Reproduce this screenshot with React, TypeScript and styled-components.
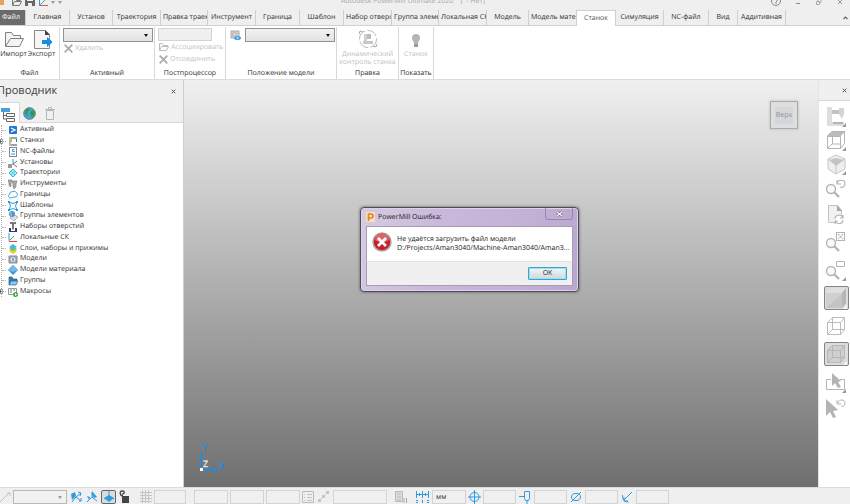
import React from "react";
import styled, { createGlobalStyle, css } from "styled-components";

const Global = createGlobalStyle`
  * { box-sizing: border-box; }
  body { margin: 0; overflow: hidden; background: #efefef; }
  body, button, input, select {
    font-family: "Open Sans", "Noto Sans", sans-serif;
    font-size: 7px;
    color: #303030;
    text-rendering: geometricPrecision;
  }
  button, input, select { margin: 0; padding: 0; border-radius: 0; }
  ul { margin: 0; padding: 0; list-style: none; }
  svg { display: block; flex: none; }
`;

const Shell = styled.div`
  display: grid;
  grid-template-rows: auto auto auto minmax(0, 1fr) auto;
  height: 100vh;
  overflow: hidden;
`;

const PlainButton = styled.button`
  display: flex;
  align-items: center;
  justify-content: center;
  border: 0;
  background: transparent;
`;

/* ---------- title bar ---------- */

const TitleBar = styled.header`
  display: grid;
  grid-template-columns: 1fr auto 1fr;
  align-items: center;
  height: 18px;
  margin-top: -8px;
  padding-top: 2px;
`;

const QuickAccess = styled.div`
  display: flex;
  align-items: center;
  gap: 3px;
`;

const Title = styled.div`
  color: #a8a8a8;
  line-height: 10px;
  white-space: pre;
  margin-right: 24px;
`;

const WindowButtons = styled.div`
  display: flex;
  justify-content: flex-end;
  align-items: center;
  gap: 11px;
  padding-right: 5px;
`;

/* ---------- ribbon ---------- */

const Tabs = styled.nav`
  display: flex;
  height: 16px;
  border-bottom: 1px solid #d2d2d2;
`;

const Tab = styled.button<{ $w: number; $kind?: "file" | "active" }>`
  flex: 0 1 ${(p) => p.$w}px;
  height: 15px;
  padding: 0 2px;
  border: 0;
  border-right: 1px solid #cfcfcf;
  background: transparent;
  overflow: hidden;
  white-space: nowrap;
  line-height: 15px;
  text-align: center;
  ${(p) =>
    p.$kind === "file" &&
    css`
      background: #6b6b6b;
      color: #fff;
      padding-right: 6px;
    `}
  ${(p) =>
    p.$kind === "active" &&
    css`
      height: 16px;
      background: #fff;
      border-top: 1px solid #cfcfcf;
      color: #555;
    `}
`;

const Collapse = styled(PlainButton)`
  margin-left: auto;
  width: 10px;
`;

const Ribbon = styled.section`
  display: flex;
  height: 54px;
  padding-top: 1px;
  background: #fff;
  border-bottom: 1px solid #dcdcdc;
`;

const Group = styled.div<{ $w: number }>`
  display: flex;
  flex-direction: column;
  justify-content: space-between;
  flex: 0 0 ${(p) => p.$w}px;
  min-width: 0;
  border-right: 1px solid #d8d8d8;
  white-space: nowrap;
`;

const GroupBody = styled.div<{ $row?: boolean }>`
  display: flex;
  flex-direction: ${(p) => (p.$row ? "row" : "column")};
  align-items: flex-start;
  padding: 1px 0 0 3px;
  gap: ${(p) => (p.$row ? 4 : 0)}px;
`;

const GroupTitle = styled.div`
  text-align: center;
  line-height: 11px;
`;

const BigButton = styled.button<{ $w: number; $off?: boolean }>`
  display: flex;
  flex-direction: column;
  align-items: center;
  width: ${(p) => p.$w}px;
  border: 0;
  background: transparent;
  line-height: 8px;
  white-space: pre;
  gap: 2px;
  color: ${(p) => (p.$off ? "#c2c2c2" : "#303030")};
`;

const BigRow = styled.div<{ $start?: boolean }>`
  display: flex;
  justify-content: ${(p) => (p.$start ? "flex-start" : "center")};
  padding-top: 2px;
`;

const SmallButton = styled.button`
  display: flex;
  align-items: center;
  gap: 2px;
  height: 12px;
  border: 0;
  background: transparent;
  color: #c2c2c2;
  padding-left: 1px;
`;

const SelectBox = styled.div`
  display: grid;
  grid-template-columns: 1fr 8px;
  align-items: center;
  width: 90px;
  height: 14px;
  border: 1px solid #929292;
  background: linear-gradient(#f2f2f2, #e2e2e2);
`;

const Select = styled.select`
  appearance: none;
  grid-area: 1 / 1 / 2 / 3;
  width: 100%;
  height: 100%;
  border: 0;
  background: transparent;
`;

const Arrow = styled.span`
  grid-area: 1 / 2;
  pointer-events: none;
  width: 0;
  border: 2px solid transparent;
  border-top: 3px solid #111;
  border-bottom: 0;
`;

const QuickArrow = styled(Arrow)`
  border-top-color: #999;
`;

const Field = styled.input<{ $w: number }>`
  flex: 0 0 ${(p) => p.$w}px;
  width: ${(p) => p.$w}px;
  height: 14px;
  border: 1px solid #d3d3d3;
  background: #f0f0f0;
  padding: 0 3px;
`;

const PostField = styled(Field)`
  flex: 0 0 13px;
  height: 13px;
`;

/* ---------- main area ---------- */

const Main = styled.main`
  display: grid;
  grid-template-columns: 184px minmax(0, 1fr) 32px;
  min-height: 0;
`;

const Explorer = styled.aside`
  display: flex;
  flex-direction: column;
  background: #fff;
  border-right: 1px solid #cfcfcf;
  overflow: hidden;
`;

const ExplorerHead = styled.div`
  display: flex;
  align-items: center;
  justify-content: space-between;
  height: 22px;
  background: #f0f0f0;
  padding-right: 7px;
`;

const ExplorerTitle = styled.h1`
  margin: 0 0 0 -3px;
  font-size: 11px;
  font-weight: 400;
  line-height: 20px;
  color: #404040;
`;

const ExplorerTabs = styled.div`
  display: flex;
  height: 21px;
  background: #f0f0f0;
  border-bottom: 1px solid #d8d8d8;
`;

const ExplorerTab = styled(PlainButton)<{ $w: number; $active?: boolean }>`
  width: ${(p) => p.$w}px;
  height: ${(p) => (p.$active ? 21 : 20)}px;
  padding-top: 3px;
  ${(p) =>
    p.$active &&
    css`
      justify-content: flex-start;
      background: #fff;
      border-top: 1px solid #d8d8d8;
      border-right: 1px solid #d8d8d8;
    `}
`;

const Tree = styled.ul`
  display: grid;
  grid-template-rows: repeat(16, 1fr);
  height: 172px;
  margin: 2px 0 0 1px;
  border-left: 1px dotted #b0b0b0;
`;

const TreeRow = styled.li`
  display: flex;
  align-items: center;
  gap: 2px;
  white-space: nowrap;
  line-height: 10px;
`;

const Branch = styled.span`
  width: 4px;
  border-top: 1px dotted #b0b0b0;
`;

const Expander = styled(PlainButton)`
  width: 5px;
  height: 5px;
  margin: 0 -3px 0 -4px;
  border: 1px solid #a0a0a0;
  background: #fff;
`;

const Viewport = styled.section`
  position: relative;
  background: linear-gradient(#f0f0f0, #6f6f6f);
`;

const ViewCube = styled.button`
  position: absolute;
  top: 21px;
  right: 20px;
  width: 28px;
  height: 28px;
  border: 1px solid #a9a9a9;
  background: #dedede;
  color: #8d9299;
  box-shadow: 0 0 3px #bdbdbd;
  padding: 0;
`;

const CubeFace = styled.span`
  display: block;
  margin: 4px;
  line-height: 17px;
  background: #d3d6da;
`;

const Axes = styled.svg`
  position: absolute;
  left: 14px;
  bottom: 14px;
`;

const Dialog = styled.div`
  position: absolute;
  left: 176px;
  top: 127px;
  width: 219px;
  padding: 0 5px 5px;
  border: 1px solid #51495c;
  border-radius: 4px;
  background: linear-gradient(100deg, #d6cbe1 0%, #c9b8dc 35%, #c2b0d6 75%, #b9a8ce);
  box-shadow: 0 0 3px #555, inset 0 0 0 1px #ded3ea;
`;

const DialogHead = styled.div`
  display: flex;
  align-items: center;
  gap: 3px;
  height: 18px;
  color: #222;
`;

const DialogClose = styled(PlainButton)`
  align-self: flex-start;
  margin-left: auto;
  width: 28px;
  height: 12px;
  border: 1px solid #9788ac;
  border-top: 0;
  border-radius: 0 0 3px 3px;
`;

const DialogBody = styled.div`
  display: flex;
  gap: 5px;
  height: 35px;
  padding: 5px 5px 0;
  background: #fff;
  border: 1px solid #a79bb6;
  border-bottom: 0;
`;

const Message = styled.p`
  margin: 3px 0 0;
  line-height: 9px;
  white-space: nowrap;
  color: #222;
`;

const DialogFoot = styled.div`
  display: flex;
  align-items: center;
  justify-content: flex-end;
  height: 25px;
  padding-right: 5px;
  background: #f0f0f0;
  border: 1px solid #a79bb6;
  border-top: 1px solid #e2e2e2;
`;

const OkButton = styled.button`
  width: 39px;
  height: 13px;
  line-height: 10px;
  border: 1px solid #35a5cc;
  border-radius: 1px;
  background: linear-gradient(#f3f6f7, #cfd8dc);
  box-shadow: inset 0 0 0 1px #9de0f5;
`;

const Side = styled.aside`
  background: #fff;
  border-left: 1px solid #e4e4e4;
  overflow: hidden;
`;

const SideHead = styled.div`
  display: flex;
  align-items: center;
  justify-content: flex-end;
  height: 21px;
  padding-right: 3px;
  background: #f0f0f0;
  border-bottom: 1px solid #d8d8d8;
`;

const Tools = styled.div`
  display: flex;
  flex-direction: column;
  align-items: center;
  padding: 3px 0 0 3px;
`;

const ToolSlot = styled.div<{ $tall?: boolean }>`
  display: flex;
  align-items: center;
  height: ${(p) => (p.$tall ? 28 : 24)}px;
`;

const Tool = styled(PlainButton)<{ $on?: boolean }>`
  width: 25px;
  height: 24px;
  ${(p) =>
    p.$on &&
    css`
      border: 1px solid #858585;
      border-radius: 2px;
      background: #dcdcdc;
    `}
`;

/* ---------- status bar ---------- */

const Status = styled.footer`
  display: flex;
  align-items: flex-start;
  height: 17px;
  padding-top: 2px;
  border-top: 1px solid #dcdcdc;
  background: #efefef;
  overflow: hidden;
`;

const StatusCell = styled.div<{ $w: number; $gap?: number }>`
  display: flex;
  flex: 0 0 ${(p) => p.$w}px;
  margin-left: ${(p) => p.$gap ?? 3}px;
`;

const StatusButton = styled(PlainButton)<{ $on?: boolean }>`
  width: 100%;
  height: 14px;
  ${(p) =>
    p.$on &&
    css`
      border: 1px solid #666;
      border-radius: 2px;
      background: #dcdcdc;
    `}
`;

const StatusSelect = styled(SelectBox)`
  width: 54px;
  border-color: #b8b8b8;
  background: #f1f1f1;
  ${Arrow} { border-top-color: #999; }
`;

/* ---------- drawings ---------- */

type IconProps = { w?: number; h?: number; children: React.ReactNode };
const Icon = ({ w = 10, h = 10, children }: IconProps) => (
  <svg width={w} height={h} viewBox={`0 0 ${w} ${h}`} fill="none" aria-hidden="true">
    {children}
  </svg>
);

const Cross = ({ s = 5, c = "#555" }: { s?: number; c?: string }) => (
  <Icon w={s} h={s}>
    <path d={`M.7.7 ${s - 0.7} ${s - 0.7}M${s - 0.7} .7.7 ${s - 0.7}`} stroke={c} strokeWidth={s > 6 ? 1.7 : 1} />
  </Icon>
);

const BLUE = "#2f9be0";

const treeItems: { label: string; open?: boolean; icon: React.ReactNode }[] = [
  { label: "Активный", icon: <><rect x="1" y="1" width="8" height="8" rx="1" fill="#2377d2" /><path d="m3 3 4 2-4 2" stroke="#fff" strokeWidth="1.3" /></> },
  { label: "Станки", open: true, icon: <><path d="M3 1h6v2H3zM3 8h6v2H3z" fill="#8ea8ac" /><path d="M1 1h2v9H1z" fill="#b3c0c2" /><path d="M8.500 3v3" stroke="#168b88" /><path d="M3.500 2v4" stroke="#d5b34c" /></> },
  { label: "NC-файлы", icon: <><rect x="1.5" y=".5" width="7" height="9" fill="#fff" stroke="#888" /><path d="M6.5 2.5h-2v2h2V4M3 7h4" stroke={BLUE} /></> },
  { label: "Установы", icon: <><path d="M0 6h4v4H0z" fill="#999" /><path d="M5 1v6" stroke={BLUE} /><path d="m5 6 4-3" stroke="#20a767" /><path d="m5 6 4 3" stroke="#e34747" /></> },
  { label: "Траектории", icon: <><path d="m5 1 4 4-4 4-4-4z" fill="#aeeaf8" stroke="#25b8da" /><path d="m3 3 4 4M7 3 3 7" stroke="#25b8da" strokeWidth=".6" /></> },
  { label: "Инструменты", icon: <path d="M0 1h4l-1 3v3L2 8 1 6V4zM4 2h5L8 5v3L6 10 5 8V5z" fill="#aaa" stroke="#777" strokeWidth=".6" /> },
  { label: "Границы", icon: <path d="M2 2.500c1-1 2-.500 3-1 2-1 3 1 4 1.500 1 2 0 4-2 4-2 0-3 1-4 1-3 0-3-3-1.500-3.500z" fill="#fff" stroke={BLUE} /> },
  { label: "Шаблоны", icon: <><path d="M1 1q4 3 8 0-3 4 0 8-4-3-8 0 3-4 0-8z" stroke={BLUE} /><path d="M0 0h2v2H0zM8 0h2v2H8zM0 8h2v2H0zM8 8h2v2H8z" fill={BLUE} /></> },
  { label: "Группы элементов", icon: <><path d="m5 3 5 3-4 4-4-3z" fill="#dedede" stroke="#999" strokeWidth=".7" /><circle cx="4" cy="3" r="3" fill="#4d98cc" /><path d="M3 1v4" stroke="#95cff1" /></> },
  { label: "Наборы отверстий", icon: <><path d="M1 6h2v3h4V6h2v4H1z" fill="#1b4774" /><path d="M2 0h6v2H2zM4 2h2v5H4z" fill="#777" /><path d="M5 4v4" stroke="#e35a4c" /></> },
  { label: "Локальные СК", icon: <><path d="M1 0v8" stroke={BLUE} /><path d="M1 8.5h8" stroke="#df4545" /><path d="m2 7 4-4" stroke="#27ac5d" /></> },
  { label: "Слои, наборы и прижимы", icon: <><path d="m1 7 4-3 4 3-4 3z" fill="#dfce2e" /><path d="m1 5 4-3 4 3-4 2z" fill="#75c65f" /><path d="m1 3 4-3 4 3-4 2z" fill="#44b9df" /></> },
  { label: "Модели", icon: <><path d="M1 2h8v7H1z" fill="#a6adb3" stroke="#858c92" /><circle cx="5" cy="5.5" r="2.3" fill="#e9f1f6" /><path d="M4 4h2v3H4z" fill="#80a4bd" /></> },
  { label: "Модели материала", icon: <><path d="m5 0 5 5-5 5-5-5z" fill="#3f93d4" /><path d="m5 0 5 5-5 2-5-2z" fill="#75b8e8" /></> },
  { label: "Группы", icon: <><path d="M1 9V1h3l1 2h4v2" fill="#3779ac" stroke="#286691" strokeWidth=".7" /><path d="M1 9 3 5h7L8 9z" fill="#91c9ed" stroke="#286691" strokeWidth=".7" /></> },
  { label: "Макросы", open: true, icon: <><path d="M.5 1.5h8v6h-8z" fill="#fff" stroke="#999" /><path d="M2 3h2M5 3h2M2 5h2" stroke="#777" /><circle cx="7.5" cy="7.5" r="2.5" fill="#39ae43" /><path d="m7 6 2 1.5L7 9z" fill="#fff" /></> },
];

const GREY = "#b4b4b4";
const Corner = () => <path d="M21 18v4h-4z" fill="#999" />;
const Lens = () => (
  <>
    <circle cx="6" cy="12" r="4.5" stroke={GREY} strokeWidth="1.4" fill="#fafafa" />
    <path d="m9 15 5 5" stroke={GREY} strokeWidth="2.4" />
  </>
);
const WireCube = () => (
  <path d="M2.5 7.5h13v12h-13zM7.5 2.5h12v12h-12zM2.5 7.5l5-5M15.5 7.5l4-5M15.5 19.5l4-5M2.5 19.5l5-5" stroke={GREY} strokeWidth=".9" />
);

const tools: { name: string; tall?: boolean; on?: boolean; icon: React.ReactNode }[] = [
  { name: "Станок", icon: <><path d="M2 2h5v19H2zM7 17h12v4H7z" fill="#dedede" /><path d="M7 5h8v4H7z" fill="#c2c2c2" /><path d="M14 3h5v6l-2 5-3-5z" fill="#d4d4d4" /><path d="M8 17h10v2H8z" fill="#b4b4b4" /><Corner /></> },
  { name: "Вид сверху", icon: <><path d="m2 7 5-5h13l-5 5z" fill="#bbb" /><path d="M2.500 7.500h13v12h-13zM2.500 7l5-4.500h12v12l-4 5M15.500 7l4-4.500M7.500 7v8M7.500 15h8M7 15l-4 4" stroke={GREY} /><Corner /></> },
  { name: "Изометрия", icon: <><path d="m11 2 9 4v10l-9 5-8-5V6z" fill="#efefef" stroke="#c6c6c6" /><path d="m3 6 8 5 9-5M11 11v10" stroke="#c6c6c6" /><path d="m4 7 7-2 8 2-8 6z" fill="#c4c4c4" /><Corner /></> },
  { name: "Предыдущий масштаб", icon: <><Lens /><path d="M12 3v4h4M12 7c1-5 8-5 8 0 0 3-3 4-5 3" stroke={GREY} strokeWidth="1.2" /></> },
  { name: "Обновить", tall: true, icon: <><path d="M3.500 2.500h9l4 5v12h-13z" fill="#f1f1f1" stroke="#c2c2c2" /><path d="M12 2v6h5z" fill="#a6a6a6" /><circle cx="14" cy="16" r="5" fill="#fff" /><path d="M10 16c0-5 7-5 8-1M18 12v3h-3M18 17c0 4-6 5-8 1M10 21v-3h3" stroke={GREY} strokeWidth="1.2" /></> },
  { name: "Показать всё", tall: true, icon: <><Lens /><rect x="11.500" y="1.500" width="8" height="8" fill="#fff" stroke={GREY} /><path d="m13 3 5 5M18 3l-5 5" stroke={GREY} strokeWidth="1.2" strokeDasharray="2 1" /></> },
  { name: "Масштаб рамкой", tall: true, icon: <><Lens /><path d="M11.500 2.500h8v5h-8z" fill="#fff" stroke={GREY} /><Corner /></> },
  { name: "Закраска", tall: true, on: true, icon: <><path d="M1 6h16v15H1z" fill="#d0d0d0" /><path d="m1 6 5-5h15l-4 5z" fill="#e0e0e0" /><path d="m17 6 4-5v15l-4 5z" fill="#b6b6b6" /><path d="m1 21 16-14v14z" fill="#c4c4c4" /><path d="M22 18v4h-4z" fill="#f8f8f8" /></> },
  { name: "Каркас", tall: true, icon: <WireCube /> },
  { name: "Прозрачность", tall: true, on: true, icon: <><path d="m2 7 5-5h13v13l-4 5H2z" fill="#cfcfcf" /><WireCube /><path d="M22 18v4h-4z" fill="#f8f8f8" /></> },
  { name: "Выбор рамкой", tall: true, icon: <><path d="M6 8.500H1.500v10h18v-10H15" stroke={GREY} /><path d="m7 2 9 8-3 1 3 5-3 1-3-5-3 3z" fill={GREY} /><Corner /></> },
  { name: "Отменить выбор", icon: <><path d="m1 2 12 11-5 1 3 6-3 1-3-6-4 4z" fill={GREY} /><path d="M12 3v4h4M13 6c1-4 7-4 7 0 0 3-2 4-4 3" stroke={GREY} /></> },
];

const tabs: [string, number, ("file" | "active")?][] = [
  ["Файл", 26, "file"], ["Главная", 44], ["Установ", 43], ["Траектория", 48], ["Правка траек", 47],
  ["Инструмент", 48], ["Граница", 44], ["Шаблон", 44], ["Набор отверс", 48], ["Группа элеме", 47],
  ["Локальная СК", 48], ["Модель", 42], ["Модель матер", 48], ["Станок", 39, "active"],
  ["Симуляция", 48], ["NC-файл", 45], ["Вид", 29], ["Аддитивная", 48],
];

const FolderLarge = () => (
  <Icon w={20} h={20}>
    <path d="M1.500 17.500v-14h6l2 3h7v3M1.500 17.500l5-8h13l-4 8z" fill="#f4f4f4" stroke="#808080" />
  </Icon>
);
const FolderSmall = ({ c = "#777" }: { c?: string }) => (
  <Icon><path d="M.500 8.500v-7h3l1 2h4v1M.500 8.500l2-4h7l-2 4z" stroke={c} /></Icon>
);

type StatusItem = { name: string; w: number; gap?: number; kind?: "field" | "select"; value?: string; on?: boolean; icon?: React.ReactNode };
const statusItems: StatusItem[] = [
  { name: "Линия", w: 11, gap: 0, icon: <path d="m0 12 9-9M7 3h3v3" stroke="#c4c4c4" /> },
  { name: "Локальная СК", w: 54, gap: 2, kind: "select" },
  { name: "Создать СК", w: 12, icon: <><path d="m1 4 4-2 1 4-4 4z" fill={BLUE} /><path d="M2 12 6 7l5-4M6 7l5 4M8 2l3 1-1 3M9 11l2 0v-3" stroke={BLUE} /></> },
  { name: "Переместить СК", w: 12, gap: 4, icon: <><path d="M6 2v5l-5 5M6 7l5 4" stroke={BLUE} /><path d="m6 1 5 6-3 1-2-3zM1 6l3 1-1 3z" fill={BLUE} /></> },
  { name: "Плоскость XY", w: 15, on: true, icon: <><path d="M6 1v6l5 2M6 7l-5 2" stroke={BLUE} /><path d="m1 8 5-3 5 3-5 4z" fill={BLUE} /></> },
  { name: "Блокировка", w: 12, gap: 2, icon: <><path d="M4 6h7v7H4z" fill="#444" /><path d="M5 6C2 6 1 1 4 1s3 3 0 3" stroke="#444" strokeWidth="1.300" /></> },
  { name: "Сетка", w: 12, gap: 10, icon: <path d="M0 2.500h12M0 5.500h12M0 8.500h12M0 11.500h12M2.500 0v13M5.500 0v13M8.500 0v13" stroke="#c4c4c4" /> },
  { name: "Шаг сетки", w: 32, gap: 2, kind: "field" },
  { name: "Координата X", w: 34, gap: 8, kind: "field" },
  { name: "Координата Y", w: 34, gap: 2, kind: "field" },
  { name: "Координата Z", w: 34, gap: 2, kind: "field" },
  { name: "Список", w: 12, gap: 2, icon: <><path d="M.500 1.500h11v11H.500z" stroke="#bbb" /><path d="M2 4.500h1M5 4.500h5M2 7.500h1M5 7.500h5M2 10.500h1M5 10.500h5" stroke="#c4c4c4" /></> },
  { name: "Измерить", w: 12, gap: 4, icon: <><path d="m1 11 9-9" stroke="#bbb" strokeDasharray="2 1" /><path d="M0 9h3v3H0zM4 5h3v3H4zM8 1h3v3H8z" fill="#c4c4c4" /></> },
  { name: "Расстояние", w: 54, kind: "field" },
  { name: "Калькулятор", w: 13, gap: 8, icon: <><path d="M.500 1.500h7v10h-7z" fill="#ddd" stroke="#bbb" /><path d="M2 4h4M2 7h4M2 10h4" stroke="#bbb" /><path d="M9 8v5M11.500 8v5" stroke="#aaa" /></> },
  { name: "Единицы измерения", w: 14, gap: 8, icon: <path d="M.500 1v7M6.500 1v7M12.500 1v7M0 4.500h13M3.500 3v3M9.500 3v3M0 10.500h2M0 12.500h2M6.500 10v3M11 10.500h2M11 12.500h2" stroke={BLUE} /> },
  { name: "Единицы", w: 34, gap: 2, kind: "field", value: "мм" },
  { name: "Допуск", w: 13, gap: 2, icon: <><circle cx="6.500" cy="7" r="4.500" stroke={BLUE} /><path d="M6.500 0v14M0 7h13" stroke={BLUE} /></> },
  { name: "Значение допуска", w: 33, gap: 2, kind: "field" },
  { name: "Припуск", w: 12, icon: <path d="M0 6.500h5M5.500 1.500h5v7l-1 2h-3l-1-2zM8 11v3" stroke={BLUE} /> },
  { name: "Значение припуска", w: 33, kind: "field" },
  { name: "Диаметр", w: 12, icon: <><ellipse cx="6" cy="7" rx="4.500" ry="3.500" stroke={BLUE} /><path d="m1 12 10-10" stroke={BLUE} /></> },
  { name: "Значение диаметра", w: 33, kind: "field" },
  { name: "Радиус", w: 12, icon: <path d="M11 2 3 10M1.500 5q0 5 2 6 1 1 4 1M3 7v4h4" stroke={BLUE} /> },
  { name: "Значение радиуса", w: 33, kind: "field" },
];

export default function App() {
  return (
    <Shell>
      <Global />
      <TitleBar>
        <QuickAccess>
          <Icon w={9}><path d="M0 1h4v7H0z" fill="#e6a35b" /></Icon>
          <PlainButton aria-label="Открыть"><FolderSmall /></PlainButton>
          <PlainButton aria-label="Сохранить"><Icon><path d="M0 0h10v9H0z" fill="#666" /><path d="M2 1h6v3H2zM3 6h4v3H3z" fill="#eee" /></Icon></PlainButton>
          <PlainButton aria-label="Система координат"><Icon><path d="M1.500 0v9" stroke={BLUE} /><path d="M1 8.500h9" stroke="#d45b5b" /><path d="m2 8 5-5" stroke="#37ae85" /></Icon></PlainButton>
          <QuickArrow /><QuickArrow />
        </QuickAccess>
        <Title>{"Autodesk PowerMill Ultimate 2020    [  - Нет]"}</Title>
        <WindowButtons>
          <PlainButton aria-label="Справка"><Icon w={12} h={12}><circle cx="6" cy="5" r="4.500" stroke="#888" /><path d="M4.500 4c0-2 3-2 3 0L6 6v2" stroke="#888" /></Icon></PlainButton>
          <PlainButton aria-label="Свернуть"><Icon><path d="M3 6.500h4" stroke="#888" /></Icon></PlainButton>
          <PlainButton aria-label="Развернуть"><Icon><path d="M2.500 4.500h3v3h-3zM4 4V2.500h3v3H6" stroke="#aaa" /></Icon></PlainButton>
          <PlainButton aria-label="Закрыть"><Icon><path d="m3 3 4 4M7 3 3 7" stroke="#999" /></Icon></PlainButton>
        </WindowButtons>
      </TitleBar>

      <Tabs>
        {tabs.map(([label, w, kind]) => <Tab key={label} $w={w} $kind={kind}>{label}</Tab>)}
        <Collapse aria-label="Свернуть ленту"><Icon w={5} h={4}><path d="m.500 3 2-2 2 2" stroke="#666" strokeWidth="1.200" /></Icon></Collapse>
      </Tabs>

      <Ribbon>
        <Group $w={60}>
          <BigRow $start>
            <BigButton $w={27}><FolderLarge />Импорт</BigButton>
            <BigButton $w={29}>
              <Icon w={20} h={20}><path d="M2.500 1.500h11l4 4v14h-15z" fill="#f6f6f6" stroke="#888" /><path d="M13 1v5h5z" fill="#444" /><path d="M10 11h5V8l6 5-6 5v-3h-5z" fill="#168de2" /></Icon>
              Экспорт
            </BigButton>
          </BigRow>
          <GroupTitle>Файл</GroupTitle>
        </Group>
        <Group $w={95}>
          <GroupBody>
            <SelectBox><Select aria-label="Активный станок" /><Arrow /></SelectBox>
            <SmallButton><Cross s={9} c="#aaa" />Удалить</SmallButton>
          </GroupBody>
          <GroupTitle>Активный</GroupTitle>
        </Group>
        <Group $w={71}>
          <GroupBody>
            <PostField $w={54} aria-label="Постпроцессор" />
            <SmallButton><FolderSmall c="#bbb" />Ассоциировать</SmallButton>
            <SmallButton><Cross s={9} c="#aaa" />Отсоединить</SmallButton>
          </GroupBody>
          <GroupTitle>Постпроцессор</GroupTitle>
        </Group>
        <Group $w={111}>
          <GroupBody $row>
            <PlainButton aria-label="Положение модели">
              <Icon w={12} h={14}><path d="M2 3h8v7H2z" fill="#d0d0d0" stroke="#aaa" /><path d="M4 5h3v3H4z" fill="#f5f5f5" stroke="#aaa" /><ellipse cx="8.500" cy="10" rx="3.500" ry="2" fill="#42a6ea" /><circle cx="8.500" cy="10" r=".8" fill="#fff" /></Icon>
            </PlainButton>
            <SelectBox><Select aria-label="Список положений модели" /><Arrow /></SelectBox>
          </GroupBody>
          <GroupTitle>Положение модели</GroupTitle>
        </Group>
        <Group $w={62}>
          <BigRow>
            <BigButton $w={60} $off>
              <Icon w={20} h={20}><circle cx="10" cy="10" r="8.500" stroke="#bbb" strokeDasharray="11 2" /><path d="M5 12h10v3H5z" fill="#c8c8c8" /><path d="M6 5h3v7H6z" fill="#d0d0d0" /><path d="M9 5h4v5H9z" fill="#bbb" /><path d="m1 5 1-3 3 1M19 15l-1 3-3-1" stroke="#aaa" /></Icon>
              {"Динамический\nконтроль станка"}
            </BigButton>
          </BigRow>
          <GroupTitle>Правка</GroupTitle>
        </Group>
        <Group $w={35}>
          <BigRow>
            <BigButton $w={33} $off>
              <Icon w={20} h={20}><path d="M8 15c0-3-2-3-2-6a4 4 0 0 1 8 0c0 3-2 3-2 6z" fill="#b5b5b5" /><path d="M8 15h4v3H8z" fill="#999" /></Icon>
              Станок
            </BigButton>
          </BigRow>
          <GroupTitle>Показать</GroupTitle>
        </Group>
      </Ribbon>

      <Main>
        <Explorer>
          <ExplorerHead>
            <ExplorerTitle>Проводник</ExplorerTitle>
            <PlainButton aria-label="Закрыть проводник"><Cross /></PlainButton>
          </ExplorerHead>
          <ExplorerTabs>
            <ExplorerTab $w={20} $active aria-label="Дерево">
              <Icon w={15} h={14}><path d="M1 0h9v4H1z" fill="#4a9fdb" /><path d="M3.500 4v7h3M3.500 7.500h3" stroke="#666" /><path d="M6.500 5.500h8v3h-8zM6.500 10.500h8v3h-8z" fill="#fff" stroke="#666" /></Icon>
            </ExplorerTab>
            <ExplorerTab $w={18} aria-label="Интернет">
              <Icon w={13} h={13}><circle cx="6.500" cy="6.500" r="5.800" fill="#3fa5da" stroke="#6b767b" /><path d="m3 2 4-1-1 3-2 1 1 4-2-1-1-3zM9 3l3 2-1 4-3 1V8L7 6z" fill="#369c43" /></Icon>
            </ExplorerTab>
            <ExplorerTab $w={24} aria-label="Корзина">
              <Icon w={12} h={13}><path d="M2.500 3.500h7v9h-7zM1 2.500h10M4.500 2V.500h3V2" stroke="#b5b5b5" /></Icon>
            </ExplorerTab>
          </ExplorerTabs>
          <Tree>
            {treeItems.map((t) => (
              <TreeRow key={t.label}>
                {t.open && <Expander aria-label={`Развернуть ${t.label}`}><Icon w={3} h={3}><path d="M0 1.500h3M1.500 0v3" stroke="#456" strokeWidth=".800" /></Icon></Expander>}
                <Branch />
                <Icon>{t.icon}</Icon>
                <span>{t.label}</span>
              </TreeRow>
            ))}
          </Tree>
        </Explorer>

        <Viewport>
          <ViewCube><CubeFace>Верх</CubeFace></ViewCube>
          <Axes width="28" height="32" viewBox="0 0 28 32" fill="none" aria-hidden="true">
            <path d="M3.500 28V14M3.500 28.500H17" stroke="#1590ef" strokeWidth="1.500" />
            <path d="m1.500 16 2-4 2 4zM15 26.500l5 2-5 2z" fill="#1590ef" />
            <text x="4" y="10" fontSize="9" fill="#1590ef" stroke="#1590ef" strokeWidth=".3">Y</text>
            <text x="21" y="28" fontSize="9" fill="#1590ef" stroke="#1590ef" strokeWidth=".3">X</text>
            <text x="5" y="26" fontSize="9" fill="#e6e6e6" stroke="#e6e6e6" strokeWidth=".3">Z</text>
            <path d="M2 27h3v3H2z" fill="#fff" />
          </Axes>
          <Dialog role="dialog" aria-labelledby="error-title">
            <DialogHead>
              <Icon w={9} h={10}><path d="M0 0h9v10H0z" fill="#f7dfbd" /><path d="M2.500 9V2h2.500a2 2 0 0 1 0 4H3" stroke="#d98522" strokeWidth="1.600" /></Icon>
              <span id="error-title">PowerMill Ошибка:</span>
              <DialogClose aria-label="Закрыть окно">
                <Icon w={7} h={6}><path d="m1 1 5 4M6 1 1 5" stroke="#666" strokeWidth="2.400" /><path d="m1 1 5 4M6 1 1 5" stroke="#fff" strokeWidth="1.200" /></Icon>
              </DialogClose>
            </DialogHead>
            <DialogBody>
              <Icon w={20} h={20}><circle cx="10" cy="10" r="9" fill="#c92027" stroke="#aaa" strokeWidth="1.500" /><path d="M3 8a7 7 0 0 1 14 0q-7 5-14 0z" fill="#dc6666" /><path d="m6 6 8 8M14 6l-8 8" stroke="#fff" strokeWidth="2.600" /></Icon>
              <Message>Не удаётся загрузить файл модели<br />D:/Projects/Aman3040/Machine-Aman3040/Aman3...</Message>
            </DialogBody>
            <DialogFoot><OkButton>OK</OkButton></DialogFoot>
          </Dialog>
        </Viewport>

        <Side>
          <SideHead><PlainButton aria-label="Закрыть панель"><Cross /></PlainButton></SideHead>
          <Tools>
            {tools.map((t) => (
              <ToolSlot key={t.name} $tall={t.tall}>
                <Tool $on={t.on} aria-label={t.name}><Icon w={22} h={22}>{t.icon}</Icon></Tool>
              </ToolSlot>
            ))}
          </Tools>
        </Side>
      </Main>

      <Status>
        {statusItems.map((s) => (
          <StatusCell key={s.name} $w={s.w} $gap={s.gap}>
            {s.kind === "field" && <Field $w={s.w} aria-label={s.name} defaultValue={s.value} />}
            {s.kind === "select" && <StatusSelect><Select aria-label={s.name} /><Arrow /></StatusSelect>}
            {!s.kind && <StatusButton $on={s.on} aria-label={s.name}><Icon w={s.on ? 12 : s.w} h={14}>{s.icon}</Icon></StatusButton>}
          </StatusCell>
        ))}
      </Status>
    </Shell>
  );
}
